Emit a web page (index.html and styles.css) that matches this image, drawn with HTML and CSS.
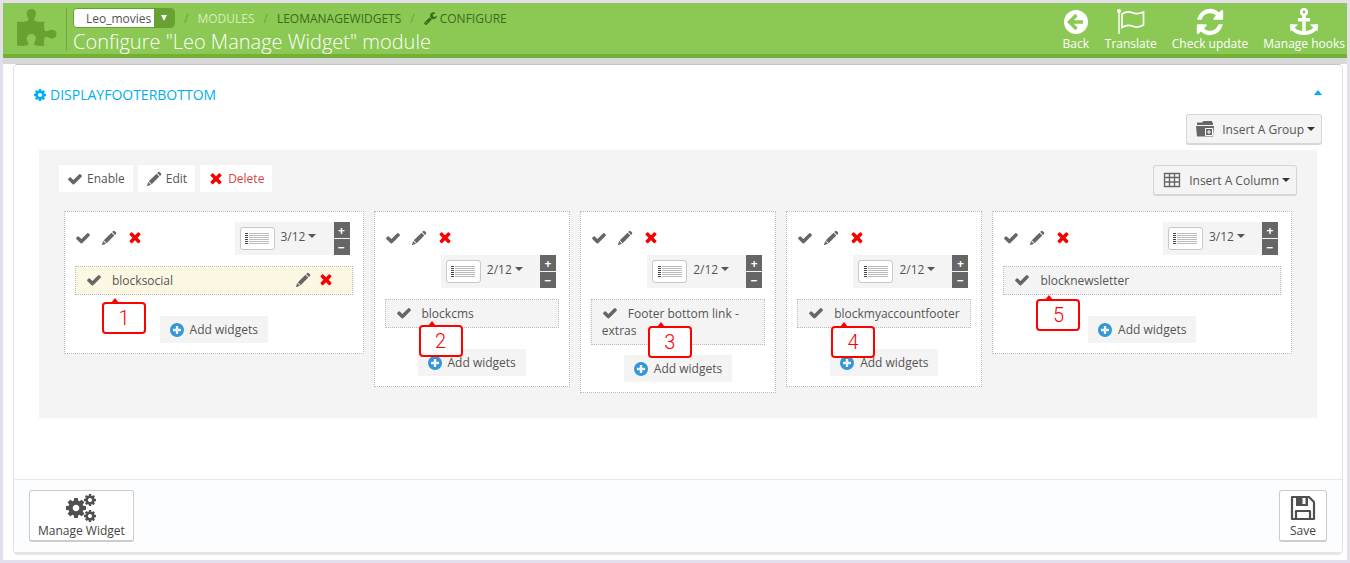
FILE: index.html
```html
<!DOCTYPE html>
<html lang="en">

<head>
    <meta charset="utf-8">
    <meta name="viewport" content="width=device-width, initial-scale=1.0">
    <title>Configure "Leo Manage Widget" module</title>
    <link rel="stylesheet" href="styles.css">
</head>

<body>
    <svg class="sprite" aria-hidden="true">
        <symbol id="check" viewBox="0 0 1792 1792"><path d="M1671 566q0 40-28 68l-724 724-136 136q-28 28-68 28t-68-28l-136-136-362-362q-28-28-28-68t28-68l136-136q28-28 68-28t68 28l294 295 656-657q28-28 68-28t68 28l136 136q28 28 28 68z"/></symbol>
        <symbol id="times" viewBox="250 350 1290 1290"><path d="M1490 1322q0 40-28 68l-136 136q-28 28-68 28t-68-28l-294-294-294 294q-28 28-68 28t-68-28l-136-136q-28-28-28-68t28-68l294-294-294-294q-28-28-28-68t28-68l136-136q28-28 68-28t68 28l294 294 294-294q28-28 68-28t68 28l136 136q28 28 28 68t-28 68l-294 294 294 294q28 28 28 68z"/></symbol>
        <symbol id="pencil" viewBox="0 0 16 16"><path d="M2.800 10.300L10.500 2.800l2.800 2.800-7.600 7.600zM2.300 11l2.700 2.800L.7 15.300zM11.200 2.100l1-1q.8-.7 1.600.1l1.100 1.100q.8.8.1 1.600l-1 1z"/></symbol>
        <symbol id="plus" viewBox="128 128 1536 1536"><path d="M1344 960v-128q0-26-19-45t-45-19h-256v-256q0-26-19-45t-45-19h-128q-26 0-45 19t-19 45v256h-256q-26 0-45 19t-19 45v128q0 26 19 45t45 19h256v256q0 26 19 45t45 19h128q26 0 45-19t19-45v-256h256q26 0 45-19t19-45zm320-64q0 209-103 385.500t-279.500 279.500-385.500 103-385.500-103-279.500-279.500-103-385.500 103-385.500 279.500-279.500 385.500-103 385.500 103 279.500 279.500 103 385.500z"/></symbol>
        <symbol id="cog" viewBox="128 128 1536 1536"><path d="M1152 896q0-106-75-181t-181-75-181 75-75 181 75 181 181 75 181-75 75-181zm512-109v222q0 12-8 23t-20 13l-185 28q-19 54-39 91 35 50 107 138 10 12 10 25t-9 23q-27 37-99 108t-94 71q-12 0-26-9l-138-108q-44 23-91 38-16 136-29 186-7 28-36 28h-222q-14 0-24.500-8.500t-11.500-21.500l-28-184q-49-16-90-37l-141 107q-10 9-25 9-14 0-25-11-126-114-165-168-7-10-7-23 0-12 8-23 15-21 51-66.500t54-70.500q-27-50-41-99l-183-27q-13-2-21-12.500t-8-23.500v-222q0-12 8-23t19-13l186-28q14-46 39-92-40-57-107-138-10-12-10-24 0-10 9-23 26-36 98.500-107.500t94.500-71.500q13 0 26 10l138 107q44-23 91-38 16-136 29-186 7-28 36-28h222q14 0 24.500 8.500t11.500 21.500l28 184q49 16 90 37l142-107q9-9 24-9 13 0 25 10 129 119 165 170 7 8 7 22 0 12-8 23-15 21-51 66.500t-54 70.500q26 50 41 98l183 28q13 2 21 12.500t8 23.500z"/></symbol>
        <symbol id="lines" viewBox="0 0 24 12"><path d="M0 .5h3M0 2.500h3M0 4.500h3M0 6.500h3M0 8.500h3M0 10.500h3" stroke="#444"/><path d="M4 .5h20M4 2.500h20M4 4.500h20M4 6.500h20M4 8.500h20M4 10.500h20" stroke="#bbb"/></symbol>
    </svg>

    <div class="page">
        <header class="topbar">
            <svg class="puzzle" viewBox="0 0 40 38"><path d="M0 13.500q5 1 9.500-.2 2.800-.8 1.500-3.300Q9.500 7.500 9.700 5.200 10.300 1 14.300 1t4.600 4.200q.2 2.300-1.300 4.800-1.300 2.500 1.500 3.300 4 1 8.400.2-1 4-.2 7.500.7 3.200 3.200 2 2.500-1.500 4.800-1.300Q39.500 22.200 39.500 26t-4.200 4.400q-2.300.2-4.800-1.400-2.500-1.200-3.200 1.500-.7 3.500.2 7-4.500.8-8.500 0-2.500-.8-1.500-3 1.500-2.500 1.300-4.500Q18 26 14.300 26t-4.500 4q-.2 2 1.300 4.500 1 2.200-1.500 3-4.600.8-9.600 0z"/></svg>
            <div class="heading">
                <nav class="crumbs">
                    <span class="shop">
                        <select aria-label="Shop">
                            <option>Leo_movies</option>
                        </select>
                    </span>
                    <span class="slash">/</span>
                    <a class="light" href="#">MODULES</a>
                    <span class="slash">/</span>
                    <a href="#">LEOMANAGEWIDGETS</a>
                    <span class="slash">/</span>
                    <a href="#"><svg class="wrench" viewBox="60 100 1680 1680"><path d="M448 1472q0-26-19-45t-45-19-45 19-19 45 19 45 45 19 45-19 19-45zm644-420l-682 682q-37 37-90 37-52 0-91-37l-106-108q-38-36-38-90 0-53 38-91l681-681q39 98 114.500 173.500t173.500 114.500zm634-435q0 39-23 106-47 134-164.500 217.500t-258.500 83.500q-185 0-316.500-131.500t-131.500-316.500 131.500-316.500 316.500-131.500q58 0 121.500 16.500t107.500 46.500q16 11 16 28t-16 28l-293 169v224l193 107q5-3 79-48.500t135.500-81 70.500-35.500q15 0 23.500 10t8.500 25z"/></svg>CONFIGURE</a>
                </nav>
                <h1>Configure "Leo Manage Widget" module</h1>
            </div>
            <div class="tools">
                <a href="#">
                    <svg viewBox="0 0 28 28"><circle cx="14" cy="14" r="12"/><path d="M14.500 7L7.500 14l7 7M8 14h13" fill="none" stroke="#8bc954" stroke-width="3.500"/></svg>
                    Back
                </a>
                <a href="#">
                    <svg viewBox="0 0 28 28"><circle cx="2" cy="3" r="2"/><path d="M1.300 3h1.400v23H1.300z"/><path d="M5 6q5-3.500 10-1.500 5 2.500 11.500-.5v13q-6 3.500-11.500 1-4.500-2-10 1.500z" fill="none" stroke="#fff" stroke-width="1.700"/></svg>
                    Translate
                </a>
                <a href="#">
                    <svg viewBox="80 80 1632 1632"><path d="M1639 1056q0 5-1 7-64 268-268 434.500t-478 166.500q-146 0-282.500-55t-243.500-157l-129 129q-19 19-45 19t-45-19-19-45v-448q0-26 19-45t45-19h448q26 0 45 19t19 45-19 45l-137 137q71 66 161 102t187 36q134 0 250-65t186-179q11-17 53-117 8-23 30-23h192q13 0 22.500 9.500t9.500 22.500zm25-800v448q0 26-19 45t-45 19h-448q-26 0-45-19t-19-45 19-45l138-138q-148-137-349-137-134 0-250 65t-186 179q-11 17-53 117-8 23-30 23h-199q-13 0-22.500-9.500t-9.500-22.500v-7q65-268 270-434.500t480-166.500q146 0 284 55.500t245 156.500l130-129q19-19 45-19t45 19 19 45z"/></svg>
                    Check update
                </a>
                <a href="#">
                    <svg viewBox="0 0 28 28"><circle cx="14" cy="4" r="2.700" fill="none" stroke="#fff" stroke-width="2.600"/><path d="M12.300 7h3.400v16h-3.400zM8 10h12v3.500H8z"/><path d="M2.500 19.500Q5 25 14 25t11.500-5.500" fill="none" stroke="#fff" stroke-width="4"/><path d="M0 16l8 .5-7.500 7zM28 16l-8 .5 7.500 7z"/></svg>
                    Manage hooks
                </a>
            </div>
        </header>

        <main>
            <section class="panel">
                <div class="panel-body">
                    <h2>
                        <svg><use href="#cog"/></svg>
                        DISPLAYFOOTERBOTTOM
                        <button class="toggle" aria-label="Collapse"></button>
                    </h2>
                    <div class="insert-group">
                        <button class="insert">
                            <svg viewBox="0 0 18 16"><path d="M1 1.500h5L7.500 0H16v1.500h1V4H1zM0 5h18l-1 10.500H1z"/><path d="M9.500 7.500h7v7h-7z" fill="#666" stroke="#fff"/><path d="M13 9v4M11 11h4" stroke="#fff"/></svg>
                            Insert A Group<i class="caret"></i>
                        </button>
                    </div>

                    <div class="group">
                        <div class="group-bar">
                            <button><svg><use href="#check"/></svg>Enable</button>
                            <button><svg><use href="#pencil"/></svg>Edit</button>
                            <button class="delete"><svg class="red"><use href="#times"/></svg>Delete</button>
                            <button class="insert">
                                <svg viewBox="0 0 18 16"><path d="M1.500 1.500h15v13h-15zM1.500 5.500h15M1.500 10h15M6.500 1.500v13M11.500 1.500v13" fill="none" stroke="#666" stroke-width="1.300"/></svg>
                                Insert A Column<i class="caret"></i>
                            </button>
                        </div>

                        <div class="columns">
                            <div class="cell wide">
                                <div class="column">
                                    <div class="column-bar">
                                        <div class="actions">
                                            <button aria-label="Enable"><svg><use href="#check"/></svg></button>
                                            <button aria-label="Edit"><svg><use href="#pencil"/></svg></button>
                                            <button aria-label="Delete"><svg class="red"><use href="#times"/></svg></button>
                                        </div>
                                        <div class="size">
                                            <button class="ratio"><span class="thumb"><svg><use href="#lines"/></svg></span>3/12<i class="caret"></i></button>
                                            <div class="steps"><button>+</button><button>−</button></div>
                                        </div>
                                    </div>
                                    <div class="widgets">
                                        <div class="widget active">
                                            <svg class="state"><use href="#check"/></svg>blocksocial
                                            <span class="widget-actions">
                                                <button aria-label="Edit"><svg><use href="#pencil"/></svg></button>
                                                <button aria-label="Delete"><svg class="red"><use href="#times"/></svg></button>
                                            </span>
                                            <span class="callout c1">1</span>
                                        </div>
                                    </div>
                                    <button class="add"><svg><use href="#plus"/></svg>Add widgets</button>
                                </div>
                            </div>

                            <div class="cell">
                                <div class="column">
                                    <div class="column-bar">
                                        <div class="actions">
                                            <button aria-label="Enable"><svg><use href="#check"/></svg></button>
                                            <button aria-label="Edit"><svg><use href="#pencil"/></svg></button>
                                            <button aria-label="Delete"><svg class="red"><use href="#times"/></svg></button>
                                        </div>
                                        <div class="size">
                                            <button class="ratio"><span class="thumb"><svg><use href="#lines"/></svg></span>2/12<i class="caret"></i></button>
                                            <div class="steps"><button>+</button><button>−</button></div>
                                        </div>
                                    </div>
                                    <div class="widgets">
                                        <div class="widget">
                                            <svg class="state"><use href="#check"/></svg>blockcms
                                            <span class="callout c2">2</span>
                                        </div>
                                    </div>
                                    <button class="add"><svg><use href="#plus"/></svg>Add widgets</button>
                                </div>
                            </div>

                            <div class="cell">
                                <div class="column">
                                    <div class="column-bar">
                                        <div class="actions">
                                            <button aria-label="Enable"><svg><use href="#check"/></svg></button>
                                            <button aria-label="Edit"><svg><use href="#pencil"/></svg></button>
                                            <button aria-label="Delete"><svg class="red"><use href="#times"/></svg></button>
                                        </div>
                                        <div class="size">
                                            <button class="ratio"><span class="thumb"><svg><use href="#lines"/></svg></span>2/12<i class="caret"></i></button>
                                            <div class="steps"><button>+</button><button>−</button></div>
                                        </div>
                                    </div>
                                    <div class="widgets">
                                        <div class="widget">
                                            <svg class="state"><use href="#check"/></svg>Footer bottom link - extras
                                            <span class="callout c3">3</span>
                                        </div>
                                    </div>
                                    <button class="add"><svg><use href="#plus"/></svg>Add widgets</button>
                                </div>
                            </div>

                            <div class="cell">
                                <div class="column">
                                    <div class="column-bar">
                                        <div class="actions">
                                            <button aria-label="Enable"><svg><use href="#check"/></svg></button>
                                            <button aria-label="Edit"><svg><use href="#pencil"/></svg></button>
                                            <button aria-label="Delete"><svg class="red"><use href="#times"/></svg></button>
                                        </div>
                                        <div class="size">
                                            <button class="ratio"><span class="thumb"><svg><use href="#lines"/></svg></span>2/12<i class="caret"></i></button>
                                            <div class="steps"><button>+</button><button>−</button></div>
                                        </div>
                                    </div>
                                    <div class="widgets">
                                        <div class="widget">
                                            <svg class="state"><use href="#check"/></svg>blockmyaccountfooter
                                            <span class="callout c4">4</span>
                                        </div>
                                    </div>
                                    <button class="add"><svg><use href="#plus"/></svg>Add widgets</button>
                                </div>
                            </div>

                            <div class="cell wide">
                                <div class="column">
                                    <div class="column-bar">
                                        <div class="actions">
                                            <button aria-label="Enable"><svg><use href="#check"/></svg></button>
                                            <button aria-label="Edit"><svg><use href="#pencil"/></svg></button>
                                            <button aria-label="Delete"><svg class="red"><use href="#times"/></svg></button>
                                        </div>
                                        <div class="size">
                                            <button class="ratio"><span class="thumb"><svg><use href="#lines"/></svg></span>3/12<i class="caret"></i></button>
                                            <div class="steps"><button>+</button><button>−</button></div>
                                        </div>
                                    </div>
                                    <div class="widgets">
                                        <div class="widget">
                                            <svg class="state"><use href="#check"/></svg>blocknewsletter
                                            <span class="callout c5">5</span>
                                        </div>
                                    </div>
                                    <button class="add"><svg><use href="#plus"/></svg>Add widgets</button>
                                </div>
                            </div>
                        </div>
                    </div>
                </div>

                <footer>
                    <button>
                        <svg viewBox="0 0 30 28"><use href="#cog" x="0" y="4" width="20" height="20"/><use href="#cog" x="18" y="0" width="12" height="12"/><use href="#cog" x="18" y="16" width="12" height="12"/></svg>
                        Manage Widget
                    </button>
                    <button>
                        <svg viewBox="0 0 30 28"><path d="M4 3h17l5 5v17H4zM8 25v-8h14v8" fill="none" stroke="#505050" stroke-width="2.200" stroke-linejoin="round"/><path d="M8 3h12v9H8z"/><path d="M14.500 4h3v6h-3z" fill="#fff"/></svg>
                        Save
                    </button>
                </footer>
            </section>
        </main>
    </div>
</body>

</html>
```
FILE: styles.css
```css
* {
    box-sizing: border-box;
}

body {
    margin: 0;
    background-color: #fff;
    color: #555;
    font-family: "Open Sans", sans-serif;
    font-size: 12px;
    line-height: 17px;
}

button {
    display: flex;
    align-items: center;
    border: 0;
    padding: 0;
    background: none;
    color: inherit;
    font: inherit;
    white-space: nowrap;
    cursor: pointer;
}

a {
    color: inherit;
    text-decoration: none;
}

svg {
    flex: none;
    width: 16px;
    height: 16px;
    fill: #666;
}

.sprite {
    display: none;
}

svg.red {
    width: 12px;
    height: 12px;
    fill: #f80000;
}

.caret {
    flex: none;
    margin-left: 3px;
    border: 4px solid transparent;
    border-top-color: currentColor;
    border-bottom: 0;
}

.page {
    display: flex;
    flex-direction: column;
    min-height: 100vh;
    border: 3px solid #e3e0ec;
}

/* header */
.topbar {
    display: flex;
    height: 55px;
    padding: 5px 2px 0 14px;
    background-color: #8bc954;
    border-bottom: 4px solid #72b135;
}

.puzzle {
    width: 40px;
    height: 38px;
    margin-right: 9px;
    fill: #68a032;
}

.heading {
    flex: 1;
    height: 43px;
    padding-left: 6px;
    border-left: 1px solid #72a747;
}

.crumbs {
    display: flex;
    align-items: center;
    height: 20px;
    gap: 9px;
    color: #3f6a1c;
}

.crumbs a {
    display: flex;
    align-items: center;
}

.crumbs .light {
    color: #d5efbb;
}

.slash {
    color: #6b9f42;
}

.wrench {
    width: 13px;
    height: 13px;
    margin-right: 3px;
    fill: #3f6a1c;
}

.shop {
    position: relative;
    width: 102px;
    height: 20px;
    overflow: hidden;
    border: 1px solid #68a032;
    border-radius: 4px;
    background-color: #68a032;
}

.shop select {
    width: 100%;
    height: 100%;
    padding: 0 0 0 12px;
    border: 0;
    appearance: none;
    background: linear-gradient(to left, #68a032 20px, #fff 20px);
    color: #555;
    font: inherit;
}

.shop::after {
    content: "";
    position: absolute;
    top: 6px;
    right: 7px;
    border: 3px solid transparent;
    border-top: 6px solid #fff;
    border-bottom: 0;
    pointer-events: none;
}

h1 {
    margin: 0;
    color: #fff;
    font-size: 20px;
    font-weight: 300;
    line-height: 27px;
}

.tools {
    display: flex;
    gap: 15px;
    color: #fff;
}

.tools a {
    display: flex;
    flex-direction: column;
    align-items: center;
    line-height: 15px;
}

.tools svg {
    width: 28px;
    height: 28px;
    fill: #fff;
}

/* panel */
main {
    flex: 1;
    display: flex;
    padding: 6px 4px 7px 10px;
    background: linear-gradient(#d8d8d8 6px, #fff 6px);
}

.panel {
    flex: 1;
    display: flex;
    flex-direction: column;
    border: 1px solid #e2e2e6;
    border-top-color: #c4c4c4;
    border-radius: 5px;
    background-color: #fff;
    box-shadow: 0 2px 0 #e6e6e6;
}

.panel-body {
    flex: 1;
    padding: 20px 25px 0 20px;
}

h2 {
    display: flex;
    align-items: center;
    gap: 4px;
    margin: 0 0 9px;
    color: #00aff0;
    font-size: 14px;
    font-weight: 400;
    line-height: 20px;
}

h2 svg {
    width: 12px;
    height: 12px;
    fill: #00aff0;
}

.toggle {
    margin: 0 -5px 6px auto;
    border: 4px solid transparent;
    border-top: 0;
    border-bottom: 5px solid #00aff0;
}

.insert-group {
    display: flex;
    justify-content: flex-end;
    margin: 0 -5px 5px 0;
}

.insert {
    gap: 8px;
    height: 31px;
    padding: 0 6px 0 9px;
    border: 1px solid #d6d6d6;
    border-bottom: 2px solid #d6d6d6;
    border-radius: 3px;
    background-color: #f4f4f4;
}

.insert svg {
    width: 18px;
}

.insert .caret {
    margin-left: -5px;
    color: #333;
}

.group {
    min-height: 268px;
    padding: 15px 20px;
    margin-left: 5px;
    background-color: #f4f4f4;
}

.group-bar {
    display: flex;
    align-items: flex-start;
    gap: 5px;
    margin-bottom: 15px;
}

.group-bar button:not(.insert) {
    height: 27px;
    padding: 0 8px;
    gap: 4px;
    background-color: #fff;
}

.group-bar .delete {
    color: #d9443f;
}

.group-bar .red {
    margin: 0 2px;
}

.group-bar .insert {
    margin-left: auto;
}

.columns {
    display: flex;
    align-items: flex-start;
}

.cell {
    width: calc(100% / 6);
    padding: 0 5px;
}

.cell.wide {
    width: 25%;
}

.column {
    padding: 10px;
    border: 1px dotted #bbb;
    background-color: #fff;
}

.column-bar {
    display: flex;
    flex-wrap: wrap;
    margin-bottom: 11px;
}

.actions {
    display: flex;
    height: 33px;
    padding-bottom: 2px;
}

.actions button {
    justify-content: center;
    width: 26px;
}

.actions button:first-child {
    justify-content: flex-start;
    width: 21px;
}

.size {
    display: flex;
    justify-content: space-between;
    width: 115px;
    height: 33px;
    margin-left: auto;
    margin-right: 3px;
    background-color: #f4f4f4;
}

.ratio {
    padding: 0 0 5px 5px;
}

.thumb {
    display: flex;
    align-items: center;
    justify-content: center;
    width: 35px;
    height: 23px;
    margin-right: 6px;
    margin-top: 5px;
    border: 1px solid #c8c8c8;
    border-radius: 3px;
    background-color: #fff;
}

.thumb svg {
    width: 24px;
    height: 12px;
}

.steps {
    display: flex;
    flex-direction: column;
    gap: 1px;
}

.steps button {
    justify-content: center;
    width: 16px;
    height: 16px;
    background-color: #666;
    color: #fff;
    font-weight: 700;
}

.widgets {
    min-height: 40px;
    margin-bottom: 10px;
}

.widget {
    position: relative;
    padding: 5px 10px;
    border: 1px dotted #bbb;
    background-color: #f4f4f4;
}

.widget.active {
    background-color: #fcf8e3;
}

.state {
    margin: -2px 10px 0 0;
    vertical-align: -3px;
}

.widget-actions {
    float: right;
    display: flex;
    gap: 9px;
    margin-right: 10px;
}

.add {
    height: 27px;
    margin: 0 auto;
    padding: 0 10px;
    gap: 6px;
    background-color: #f4f4f4;
}

.add svg {
    width: 14px;
    height: 14px;
    fill: #3498d8;
}

/* numbered callouts lie over the widgets */
.callout {
    position: absolute;
    z-index: 1;
    width: 44px;
    height: 32px;
    border: 2px solid #f00;
    border-radius: 4px;
    background-color: #fff;
    color: #f00;
    font-family: Roboto, "Liberation Sans", sans-serif;
    font-size: 20px;
    font-weight: 300;
    line-height: 28px;
    text-align: center;
}

.callout::before {
    content: "";
    position: absolute;
    top: -6px;
    left: 7px;
    border: 4px solid transparent;
    border-top: 0;
    border-bottom: 5px solid #f00;
}

.c1 {
    top: 35px;
    left: 26px;
}

.c2 {
    top: 25px;
    left: 33px;
}

.c3 {
    top: 26px;
    left: 56px;
}

.c4 {
    top: 26px;
    left: 33px;
}

.c5 {
    top: 32px;
    left: 32px;
}

/* panel footer */
footer {
    display: flex;
    justify-content: space-between;
    padding: 10px 15px;
    border-top: 1px solid #e8e8ec;
    background-color: #fcfdfe;
}

footer button {
    flex-direction: column;
    height: 52px;
    padding: 3px 8px 0;
    border: 1px solid #ccc;
    border-bottom-width: 2px;
    border-radius: 3px;
    background-color: #fff;
    color: #444;
}

footer svg {
    width: 30px;
    height: 28px;
    fill: #505050;
}
```
